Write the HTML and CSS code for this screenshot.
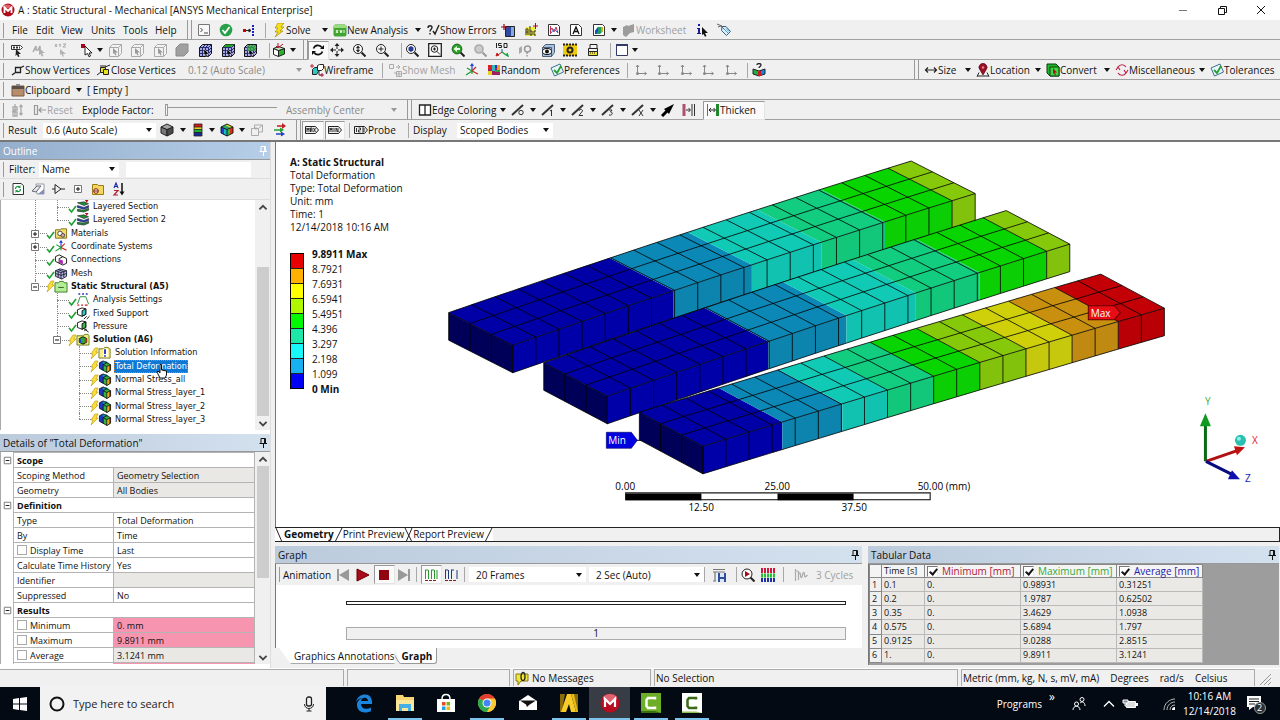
FILE: index.html
```html
<!DOCTYPE html>
<html lang="en">
<head>
<meta charset="utf-8">
<title>A : Static Structural - Mechanical [ANSYS Mechanical Enterprise]</title>
<link rel="stylesheet" href="styles.css">
</head>
<body>
<svg class="defs" aria-hidden="true">
<symbol id="logo" viewBox="0 0 14 14"><circle cx="7" cy="7" r="6.5" fill="#b00d1c"/><ellipse cx="6" cy="3.5" rx="4" ry="2" fill="#e0606a"/><path d="M3.500 10V4.500L7 8l3.500-3.500V10" fill="none" stroke="#fff" stroke-width="1.800"/></symbol>
<symbol id="prompt" viewBox="0 0 14 14"><path d="M1.500 1.500h11v11h-11z" fill="#f8f8f8" stroke="#777"/><path d="M3.500 5l2 2-2 2M7 10h4" fill="none" stroke="#444"/></symbol>
<symbol id="ok" viewBox="0 0 14 14"><circle cx="7" cy="7" r="6.300" fill="#28a04a"/><path d="M3.500 7l2.500 3 4.500-6" fill="none" stroke="#fff" stroke-width="1.800"/></symbol>
<symbol id="dots" viewBox="0 0 14 14"><path d="M1 6h3v3H1z" fill="#c00"/><path d="M4 7.500h4M7 6l2 1.500L7 9z" stroke="#222" fill="#222"/><path d="M10 2h2v2h-2zM10 5h2v2h-2zM10 8h2v2h-2zM10 11h2v2h-2z" fill="#2020c0"/></symbol>
<symbol id="bolt" viewBox="0 0 14 14"><path d="M6 0h6L9 4h3L8 8h3L3 14l3-5H3l3-4H3z" fill="#f5de1a" stroke="#9a8200" stroke-width=".6"/></symbol>
<symbol id="newan" viewBox="0 0 14 14"><rect x=".5" y="1.500" width="13" height="12" rx="2" fill="#43a531"/><path d="M1 2h12v3H1z" fill="#9bdc7c"/><path d="M3 7l2 3m0-3l-2 3m4-3l1 3 1-3m2 0v3" stroke="#e8ffd8" fill="none"/></symbol>
<symbol id="help" viewBox="0 0 14 14"><path d="M2 5c0-3 4-3 4-.5C6 6 4 6.500 4 8.500m0 1.500v1.500M7 8l2 3 4-9" fill="none" stroke="#222" stroke-width="1.400"/></symbol>
<symbol id="img" viewBox="0 0 14 14"><path d="M4.500 3.500h9v10h-9z" fill="#2e4a9e" stroke="#222"/><path d="M10 4h3v9h-3z" fill="#88a8e0"/><path d="M0 4h6M3 1v6" stroke="#a00018" stroke-width="1.200"/></symbol>
<symbol id="abc" viewBox="0 0 14 14"><path d="M1 4h11v9H1z" fill="#f1ee3f"/><path d="M2 12V6h2v6M2 9h2M6 3v9h2V8H6M12 8h-2v4h2" stroke="#333" fill="none"/><path d="M9 3h5M11.500 0v6" stroke="#b00018"/></symbol>
<symbol id="chart" viewBox="0 0 14 14"><path d="M1.500 1.500h9l2 2v9h-11z" fill="#fff" stroke="#333"/><path d="M3.500 3v8M3 8l2-3 2 4 2-5 2 6" stroke="#c03050" fill="none"/><path d="M4 10l3-4 4 4" stroke="#4070d0" fill="none"/></symbol>
<symbol id="doca" viewBox="0 0 14 14"><path d="M1.500 1.500h8l3 3v8h-11z" fill="#fff" stroke="#333"/><path d="M4 11l3-7 3 7M5 8.500h4" stroke="#111" fill="none" stroke-width="1.300"/></symbol>
<symbol id="docc" viewBox="0 0 14 14"><path d="M1.500 1.500h9l2 2v9h-11z" fill="#fff" stroke="#333"/><path d="M3 8l3-4h5v4l-3 3H3z" fill="#18a060"/><path d="M3 8l3-4v4l-2 3H3z" fill="#2040d0"/><path d="M9 4h2v4l-2 2z" fill="#e0a010"/></symbol>
<symbol id="sheet" viewBox="0 0 14 14"><path d="M1 4l4-2 1 1 6-2v8l-4 1-4 4-3-2z" fill="#9c9c9c"/></symbol>
<symbol id="info" viewBox="0 0 14 14"><path d="M3 1h2v2H3zM2 5h3v5h1v1H2v-1h1V6H2z" fill="#1a1a9a"/><path d="M7 4l6 6H10l1.500 3-1.500.7L8.500 11 7 12z" fill="#111"/></symbol>
<symbol id="tag" viewBox="0 0 14 14"><path d="M5 3.500h4l4.500 5-4 4-5-5z" fill="#d8eefa" stroke="#3a6080"/><path d="M0 1l5 2M1 4l3-1 3 3" stroke="#666" fill="none"/><path d="M7 6l4 4M9 5.500l3 3" stroke="#4aa0c8"/></symbol>
<symbol id="rzoom" viewBox="0 0 14 14"><path d="M1.500 2.500h9l2 2-2 2h-9z" fill="#fff" stroke="#333"/><path d="M3 4.500h7" stroke="#333" stroke-dasharray="2 1" stroke-width="2"/><path d="M6 6l5 5H8.500l1 2.500-1.500.5-1-2.500L5.500 13z" fill="#222"/></symbol>
<symbol id="gcur" viewBox="0 0 14 14"><path d="M1 9l3-6v4h2l2-4v5" fill="none" stroke="#aaa" stroke-width="1.500"/><path d="M7 5l6 5h-3l1.500 3-1.500.6L8.500 11 7 12z" fill="#b0b0b0"/></symbol>
<symbol id="xyz" viewBox="0 0 14 14"><path d="M1 1l2 3m0-3L1 4m4-3l1 1.500L7 1M6 2.500V4m3-3h3L9 4h3" stroke="#999" fill="none" stroke-width=".8"/><path d="M6 6l6 5H9l1 2.500H8.500L7.500 11 6 12z" fill="#b4b4b4"/></symbol>
<symbol id="cursor" viewBox="0 0 14 14"><path d="M1 1h4v4H1z" fill="#b00018"/><path d="M5 3l7 7H9l1.500 3-1.500.8-1.500-3.300L5 12z" fill="#fff" stroke="#222"/></symbol>
<symbol id="selg" viewBox="0 0 14 14"><path d="M1.500 4.500l3-3h9v9l-3 3h-9zM1.500 4.500h9v9M10.500 4.500l3-3" fill="#f2f2f2" stroke="#aaa"/><path d="M5 5l5 4.500H7.500l1 2.500-1 .5L6 10l-1 1z" fill="#999"/></symbol>
<symbol id="selbox" viewBox="0 0 14 14"><path d="M1 5l4-4h8v8l-4 4H1z" fill="#a0a0a0" stroke="#8a8a8a"/></symbol>
<symbol id="selb" viewBox="0 0 14 14"><path d="M1.500 4.500l3-3h9v9l-3 3h-9z" fill="#aaa8e0" stroke="#111"/><path d="M1.500 7.500h9l3-3M1.500 10.500h9l3-3M4.500 4.500v9M7.500 4.500v9M10.500 4.500v9M4.500 4.500l3-3M7.500 4.500l3-3M10.500 4.500l3-3M1.500 4.500h9" stroke="#222a70" fill="none"/><path d="M6 6l5 5H8.500l1 2-1 .5L7 11l-1 1z" fill="#000" stroke="#fff" stroke-width=".4"/></symbol>
<symbol id="selgr" viewBox="0 0 14 14"><use href="#selb"/><path d="M2 4l3-2.500h8L10 4z" fill="#25a025"/></symbol>
<symbol id="selgg" viewBox="0 0 14 14"><use href="#selb"/><path d="M4 2h9v6H4z" fill="#30b030" opacity=".7"/></symbol>
<symbol id="gcube" viewBox="0 0 14 14"><path d="M1.500 5.500l5 2v6l-5-2z" fill="#fff" stroke="#222"/><path d="M6.500 7.500l6-2v5.500l-6 2.500z" fill="#27b427" stroke="#222"/><path d="M1.500 5.500l5-2 6 2-6 2z" fill="#c8f0c8" stroke="#222"/><path d="M6 0v5M4 3l2 2 5-4" stroke="#c01028" fill="none"/></symbol>
<symbol id="rotate" viewBox="0 0 14 14"><path d="M2.500 5.500c1.500-4 6.500-4 8.500-1M11.500 8.500c-1.500 4-6.500 4-8.500 1" fill="none" stroke="#111" stroke-width="1.600"/><path d="M13 2v4H9zM1 12V8h4z" fill="#111"/></symbol>
<symbol id="move" viewBox="0 0 14 14"><path d="M7 2v10M2 7h10" stroke="#222" stroke-dasharray="4 2"/><path d="M7 0l2.500 3h-5zM7 14l2.500-3h-5zM0 7l3-2.500v5zM14 7l-3-2.500v5z" fill="#222"/></symbol>
<symbol id="mag" viewBox="0 0 14 14"><circle cx="6" cy="6" r="4.500" fill="#f8f8f8" stroke="#222"/><path d="M9.500 9.500l4 4" stroke="#222" stroke-width="2"/><path d="M6 3v6M4.500 5L6 3l1.500 2zM4.500 7L6 9l1.500-2z" stroke="#222" fill="#222" stroke-width=".7"/></symbol>
<symbol id="magp" viewBox="0 0 14 14"><circle cx="6" cy="6" r="4.500" fill="#f8f8f8" stroke="#222"/><path d="M9.500 9.500l4 4" stroke="#222" stroke-width="2"/><path d="M6 3.500v5M3.500 6h5" stroke="#222"/></symbol>
<symbol id="magf" viewBox="0 0 14 14"><circle cx="6" cy="6" r="4.500" fill="#fff" stroke="#222"/><path d="M9.500 9.500l4 4" stroke="#222" stroke-width="2"/><path d="M6 3l2.500 1.500v3L6 9 3.500 7.500v-3z" fill="#283c96"/></symbol>
<symbol id="magb" viewBox="0 0 14 14"><path d="M.7.7h12.600v12.600H.7z" fill="#fff" stroke="#222" stroke-width="1.300"/><circle cx="6.500" cy="6" r="3.300" fill="#eee" stroke="#222"/><path d="M9 8.500l3 3M6.500 4.500v3M5 6h3" stroke="#222"/></symbol>
<symbol id="maggr" viewBox="0 0 14 14"><circle cx="6" cy="6" r="4.700" fill="#2ea52e" stroke="#2b7a2b" stroke-width="1.400"/><path d="M9.500 9.500l4 4" stroke="#222" stroke-width="2"/><path d="M2.500 6L6 3v2h3v2H6v2z" fill="#e8ffe0"/></symbol>
<symbol id="magx" viewBox="0 0 14 14"><circle cx="6" cy="6" r="4" fill="#ccc" stroke="#aaa" stroke-width="1.600"/><path d="M9.500 9.500l4 4" stroke="#999" stroke-width="2"/></symbol>
<symbol id="iso" viewBox="0 0 14 14"><path d="M1.500 0v5M6.500.5h-3v2h3v2h-3M9 .5h3v4H9z" stroke="#222" fill="none"/><path d="M7 9V6" stroke="#2050c0"/><path d="M7 9l-4 3M1 13l1-3 2 2z" stroke="#c02020" fill="#c02020"/><path d="M7 9l4 3 2 1-1-3" stroke="#18a040" fill="none" stroke-width="1.400"/></symbol>
<symbol id="look" viewBox="0 0 14 14"><path d="M1 5l3-2v6l-3 2z" fill="#aaa"/><circle cx="9.500" cy="6" r="3" fill="none" stroke="#999" stroke-width="1.500"/><path d="M9 9v2M9 12v1.500" stroke="#999" stroke-width="1.500"/></symbol>
<symbol id="eye" viewBox="0 0 14 14"><path d="M1.500 4.500l3-3h9v8l-3 4h-9z" fill="#a8c2de" stroke="#4a6078"/><path d="M1.500 4.500h9v9" stroke="#4a6078" fill="none"/><ellipse cx="6" cy="8.500" rx="4.500" ry="3" fill="#fff" stroke="#111"/><circle cx="6" cy="8.500" r="2" fill="#111"/></symbol>
<symbol id="film" viewBox="0 0 14 14"><path d="M0 1h14v12H0z" fill="#f2cc0c"/><path d="M0 1.500h14M0 12.500h14" stroke="#222" stroke-width="2" stroke-dasharray="2 1"/><circle cx="7" cy="7" r="2.500" fill="#f2cc0c" stroke="#222" stroke-width="2"/></symbol>
<symbol id="print" viewBox="0 0 14 14"><path d="M4 1.500h7v4H4zM2.500 5.500h9v3h-9z" fill="#f4f4f4" stroke="#222"/><path d="M2.500 8.500h9v4h-9z" fill="#f0e028" stroke="#222"/><path d="M4 10h6" stroke="#222" stroke-dasharray="1 1"/></symbol>
<symbol id="win" viewBox="0 0 14 14"><path d="M1.500 1.500h11v11h-11z" fill="#fff" stroke="#333a6a"/><path d="M1 2h12" stroke="#333a6a" stroke-width="2"/></symbol>
<symbol id="vert" viewBox="0 0 14 14"><path d="M4.500 4.500h5v5h-5zM9 5l4-2M5 9l-4 3" fill="none" stroke="#222" stroke-width="1.300"/></symbol>
<symbol id="cvert" viewBox="0 0 14 14"><path d="M3.500 4.500h5v5h-5z" fill="#e8e020" stroke="#222"/><path d="M6.500 6.500h5v5h-5z" fill="#e8e020" stroke="#222"/><path d="M8 4l5-2M0 12l4-3M3 3h6" stroke="#222" fill="none"/></symbol>
<symbol id="wire" viewBox="0 0 14 14"><path d="M2.500 6.500l2-2h4v4l-2 3h-4z" fill="#35c5c0" stroke="#222"/><path d="M7.500 2.500l2-1h4v4l-2 2h-4zM9 8v4h4" fill="#fff" stroke="#222"/><path d="M0 3h4M2 1v4M10 12h4M12 10v4" stroke="#c02040"/></symbol>
<symbol id="smesh" viewBox="0 0 14 14"><path d="M1.500 1.500h4v4h-4zM8.500 8.500h5v5h-5zM11 8.500v5M8.500 11h5M8 4h4M10 2l2 2-2 2M6 10l2 0" fill="none" stroke="#aaa"/></symbol>
<symbol id="axes" viewBox="0 0 14 14"><path d="M7 8V1M5.500 3L7 1l1.500 2" stroke="#2040d0" fill="none" stroke-width="1.200"/><path d="M7 8l6 3M7 8l4-4" stroke="#d02020" fill="none" stroke-width="1.200"/><path d="M7 8l-6 4M7 8L2 5M7 8v3" stroke="#18a030" fill="none" stroke-width="1.200"/></symbol>
<symbol id="random" viewBox="0 0 14 14"><path d="M1 2h12v10H1z" fill="#a02060"/><path d="M1 2h4v4H1z" fill="#e02020"/><path d="M5 2h3v6H5z" fill="#30b8c0"/><path d="M8 2h2v3H8z" fill="#3030c0"/><path d="M10 2h3v5h-3z" fill="#f0a020"/><path d="M1 8h4v4H1z" fill="#e8d020"/><path d="M8 7h5v2H8z" fill="#30a040"/></symbol>
<symbol id="pref" viewBox="0 0 14 14"><path d="M1 5l9-4 3.500 8-9 4z" fill="#e8f6fc" stroke="#3a7090"/><path d="M4 7l3 3 4-7" fill="none" stroke="#28a030" stroke-width="1.800"/></symbol>
<symbol id="gax" viewBox="0 0 14 14"><path d="M3.500 10V2M2 4l1.500-2L5 4M3.500 10.500h9M10.500 9l2 1.500-2 1.500" fill="none" stroke="#888"/><circle cx="3.500" cy="10.500" r="1.500" fill="#888"/></symbol>
<symbol id="book" viewBox="0 0 14 14"><path d="M1 6l6 2v5l-6-2z" fill="#20b040" stroke="#222"/><path d="M13 6L7 8v5l6-2z" fill="#2080e0" stroke="#222"/><path d="M6 8h3v5H6z" fill="#c02020"/><path d="M5 2c0-2 4-2 4 0 0 1.500-2 1.500-2 3" stroke="#222" fill="none" stroke-width="1.300"/></symbol>
<symbol id="size" viewBox="0 0 14 14"><path d="M1.500 7h11M4 4.500L1.500 7 4 9.500M10 4.500L12.500 7 10 9.500" fill="none" stroke="#222" stroke-width="1.200"/></symbol>
<symbol id="pin3" viewBox="0 0 14 14"><path d="M1 13.500l2-4M13 13.500l-2-4M1 13h12" stroke="#222" fill="none"/><path d="M7 12L4 7a4 4 0 1 1 6 0z" fill="#9c0f28" stroke="#400" stroke-width=".6"/><circle cx="7" cy="4.500" r="1.200" fill="#ec8090"/></symbol>
<symbol id="conv" viewBox="0 0 14 14"><path d="M1 1h9l3 3v9H4l-3-3z" fill="#1fb52a" stroke="#103a10"/><path d="M4 4h9v9H4z" fill="#38d840" stroke="#103a10"/><path d="M7 5l4 4.500H9l1 2.500-1 .5L8 10l-1 1z" fill="#b01020"/></symbol>
<symbol id="misc" viewBox="0 0 14 14"><path d="M3 4c2-3 6-3 8 0M3 10c2 3 6 3 8 0M1 7l2-3 2 3M13 7l-2 3-2-3" fill="none" stroke="#c02048" stroke-width="1.200"/></symbol>
<symbol id="clip" viewBox="0 0 14 14"><path d="M1 3h12v10H1z" fill="#b88d6c" stroke="#7a5a40"/><path d="M1 3h12v3H1z" fill="#5a5048"/><path d="M5 1h4v2H5z" fill="#8a8a8a"/></symbol>
<symbol id="expl" viewBox="0 0 14 14"><path d="M2 4h4v3H2zM2 9h4v4H2zM4 1v12M1 9l6-3M10 2v10M8.500 4L10 2l1.500 2M8.500 10l1.500 2 1.500-2" fill="none" stroke="#aaa" stroke-width="1.300"/></symbol>
<symbol id="reset" viewBox="0 0 14 14"><path d="M1.500 2.500h3v9h-3zM6 7h7M8.500 4.500L6 7l2.500 2.500" fill="none" stroke="#999" stroke-width="1.200"/></symbol>
<symbol id="edge" viewBox="0 0 14 14"><path d="M1.500 2h11v10h-11zM7 2v10" fill="#fff" stroke="#222" stroke-width="1.300"/></symbol>
<symbol id="e0" viewBox="0 0 14 14"><path d="M1 12L12 2" stroke="#333" stroke-width="2"/><circle cx="10" cy="9.500" r="2.200" fill="none" stroke="#333"/></symbol>
<symbol id="e1" viewBox="0 0 14 14"><path d="M1 12L12 2" stroke="#333" stroke-width="2"/><path d="M9 8l1.500-1v6" fill="none" stroke="#333"/></symbol>
<symbol id="e2" viewBox="0 0 14 14"><path d="M1 12L12 2" stroke="#333" stroke-width="2"/><path d="M8 8c0-2 4-2 3.500 0L8 12.500h4" fill="none" stroke="#333"/></symbol>
<symbol id="e3" viewBox="0 0 14 14"><path d="M1 12L12 2" stroke="#333" stroke-width="2"/><path d="M8 7h3L9.500 9c3 0 2 4-1.500 3" fill="none" stroke="#333"/></symbol>
<symbol id="ex" viewBox="0 0 14 14"><path d="M1 12L12 2" stroke="#333" stroke-width="2"/><path d="M8 7l4 6m0-6l-4 6" fill="none" stroke="#333"/></symbol>
<symbol id="arrow" viewBox="0 0 14 14"><path d="M1 13l5-5" stroke="#000" stroke-width="3"/><path d="M13 1L3 6l5 5z" fill="#000"/></symbol>
<symbol id="gaps" viewBox="0 0 14 14"><path d="M2 1v12" stroke="#b05070" stroke-width="3"/><path d="M4 7h4M6.500 5l2 2-2 2" stroke="#333" fill="none"/><path d="M10 1v12M12.500 1v12" stroke="#333"/></symbol>
<symbol id="thick" viewBox="0 0 14 14"><path d="M1.500 1v12" stroke="#2a9a2a"/><path d="M3 7h6M5 5L3 7l2 2M7.500 5l2 2-2 2" stroke="#222" fill="none"/><path d="M10 1h3v12h-3z" fill="#1e8a2a"/></symbol>
<symbol id="cube" viewBox="0 0 14 14"><path d="M1 4l6 2.500V13L1 10z" fill="#787878" stroke="#222"/><path d="M13 4L7 6.500V13l6-3z" fill="#4a4a4a" stroke="#222"/><path d="M1 4l6-3 6 3-6 2.500z" fill="#a4a4a4" stroke="#222"/></symbol>
<symbol id="leg" viewBox="0 0 14 14"><path d="M3 1h8v12H3z" fill="#1a2a90"/><path d="M3 1h8v3H3z" fill="#d81818"/><path d="M3 4h8v2H3z" fill="#e8d020"/><path d="M3 6h8v3H3z" fill="#20b030"/><path d="M3 1h8v12H3zM3 4h8M3 6.500h8M3 9.500h8" stroke="#222" fill="none" stroke-width=".8"/></symbol>
<symbol id="ccube" viewBox="0 0 14 14"><path d="M1 4l6 2.500V13L1 10z" fill="#2040d8"/><path d="M4 5l3 1.500V13l-3-1.500z" fill="#18b8c8"/><path d="M7 6.500l3-1v6L7 13z" fill="#28c030"/><path d="M10 5.500L13 4v6l-3 1.500z" fill="#e02818"/><path d="M1 4l6-3 6 3-6 2.500z" fill="#28a868"/><path d="M7 1l6 3-2 1-6-3z" fill="#e8d820"/><path d="M1 4l6 2.500V13L1 10zM7 6.500L13 4v6l-6 3M1 4l6-3 6 3" stroke="#111" fill="none" stroke-width=".9"/></symbol>
<symbol id="rcube" viewBox="0 0 14 14"><path d="M1 3l4-2 3 2v8l-2 1-5-3z" fill="#1c38c0"/><path d="M4 3l4-2 3 2-4 2z" fill="#18a0a8"/><path d="M5 5l4-2 4 2v6l-4 2.500L5 11z" fill="#2cb83c"/><path d="M9 7l4-2v6l-4 2.500z" fill="#e03018"/><path d="M9 7l2-1v6.300L9 13.500z" fill="#e8d820"/><path d="M1 3l4-2 4 2M1 3v6l4 2M5 5l4-2 4 2v6l-4 2.500L5 11zM5 5l4 2 4-2M9 7v6.500" fill="none" stroke="#111" stroke-width=".9"/></symbol>
<symbol id="gbox" viewBox="0 0 14 14"><path d="M1.500 5.500h7v7h-7zM4.500 5V2h8v7H9M6 7V4M8.500 5.500l4-3.500" fill="none" stroke="#aaa"/></symbol>
<symbol id="vec" viewBox="0 0 14 14"><path d="M4 3h6" stroke="#c02020" stroke-width="1.500"/><path d="M9 0l4 3-4 3z" fill="#c02020"/><path d="M1 7h6" stroke="#20a030" stroke-width="1.500"/><path d="M7 4.500L11 7 7 9.500z" fill="#20a030"/><path d="M3 11h5" stroke="#2040c0" stroke-width="1.500"/><path d="M8 8.500l4 2.500-4 2.500z" fill="#2040c0"/></symbol>
<symbol id="max" viewBox="0 0 14 14"><path d="M.5 3.500h10l3 3.500-3 3.500H.5z" fill="#eee" stroke="#222"/><path d="M2 9V5l1 2 1-2v4M5.500 9V5h1.500v4M5.500 7H7M8.500 5l2 4m0-4l-2 4" stroke="#222" fill="none" stroke-width=".9"/></symbol>
<symbol id="min" viewBox="0 0 14 14"><path d="M.5 3.500h10l3 3.500-3 3.500H.5z" fill="#eee" stroke="#222"/><path d="M2 9V5l1 2 1-2v4M6 5v4M8 9V5l2 4V5" stroke="#222" fill="none" stroke-width=".9"/></symbol>
<symbol id="probe" viewBox="0 0 14 14"><path d="M.5 3.500h10l3 3.500-3 3.500H.5z" fill="#eee" stroke="#222"/><path d="M2.500 5v4M4.500 5h2v2h-2v2h2M8 5h2v4H8M8 7h2" stroke="#222" fill="none" stroke-width=".9"/></symbol>
<symbol id="refresh" viewBox="0 0 14 14"><path d="M2 1.500h8l2.500 2v9H2z" fill="#fff" stroke="#333"/><path d="M4.500 7c0-3 3-3 4-2M9.500 7c0 3-3 3-4 2" stroke="#1c9440" fill="none" stroke-width="1.300"/><path d="M9.500 3v3H7zM4.500 11V8H7z" fill="#1c9440"/></symbol>
<symbol id="erase" viewBox="0 0 14 14"><path d="M5 2h8v10H6z" fill="#fff" stroke="#99a"/><path d="M1 9l5-5h4L5 10z" fill="#e4e4ee" stroke="#667"/><path d="M7 12h6V7z" fill="#8490b8"/></symbol>
<symbol id="tri" viewBox="0 0 14 14"><path d="M1 7h3M4 2.500l6 4.500-6 4.500zM10 7h4" fill="none" stroke="#222"/></symbol>
<symbol id="plus" viewBox="0 0 14 14"><path d="M3.500 3.500h7v7h-7z" fill="#fff" stroke="#777"/><path d="M7 5v4M5 7h4" stroke="#111"/></symbol>
<symbol id="minus" viewBox="0 0 14 14"><path d="M3.500 3.500h7v7h-7z" fill="#fff" stroke="#777"/><path d="M5 7h4" stroke="#111"/></symbol>
<symbol id="fold" viewBox="0 0 14 14"><path d="M1.500 2.500h5l1 1h5v9h-11z" fill="#f2d75c" stroke="#9c7c10"/><circle cx="5" cy="9" r="2.300" fill="#fff" stroke="#801010"/><path d="M3 9h4" stroke="#801010"/></symbol>
<symbol id="az" viewBox="0 0 14 14"><path d="M2 6l2-5 2 5M3 4.500h2" stroke="#2030b0" fill="none" stroke-width="1.200"/><path d="M2 8.500h4L2 13h4" stroke="#b02030" fill="none" stroke-width="1.200"/><path d="M10 1v11" stroke="#111" stroke-width="1.500"/><path d="M7.500 9.500h5L10 13.500z" fill="#111"/></symbol>
<symbol id="pushpin" viewBox="0 0 14 14"><path d="M5 2.500h4.500v5M5 2.500v5M8.500 3v4M3.500 7.500h7.500M7.500 8v4" stroke="currentColor" fill="none"/></symbol>
<symbol id="chk" viewBox="0 0 9 14"><path d="M1 9l2.500 3L8 6" stroke="#1ea030" fill="none" stroke-width="1.600"/></symbol>
<symbol id="flash" viewBox="0 0 9 14"><path d="M5 2h3L6 6h2L1 13l2-5H1z" fill="#f8e038" stroke="#c8a010" stroke-width=".7"/></symbol>
<symbol id="layer" viewBox="0 0 14 14"><path d="M1 3l7-1 5 2-5 2z" fill="#209040" stroke="#111" stroke-width=".6"/><path d="M1 6l7 2 5-2v2L8 10 1 8z" fill="#2848c8" stroke="#111" stroke-width=".6"/><path d="M1 10l7 1 5-2v2l-5 2-7-1z" fill="#209040" stroke="#111" stroke-width=".6"/><path d="M9 0h4l-2 3z" fill="#b01020"/></symbol>
<symbol id="mat" viewBox="0 0 14 14"><path d="M1 3h5l1-1h6v10H1z" fill="#f0e070" stroke="#806810"/><circle cx="6" cy="7" r="2.500" fill="#fff" stroke="#444"/><circle cx="9" cy="9" r="2" fill="#e0a8a8" stroke="#444"/></symbol>
<symbol id="conn" viewBox="0 0 14 14"><path d="M1 4l4-2 4 2v5l-4 2-4-2z" fill="#fff" stroke="#111"/><path d="M5 6l4-2 4 2v5l-4 2-4-2z" fill="#fff" stroke="#111"/><path d="M6 7l3 1v4l-3-1z" fill="#b020b0"/></symbol>
<symbol id="mesh" viewBox="0 0 14 14"><path d="M1 4l5-2 7 2v6l-5 3-7-3z" fill="#b8b8e8" stroke="#223"/><path d="M1 7l6 2 6-2M1 4l6 2 6-2M4 5v6M7 6v7M10 5v6M4 3l6 2" stroke="#223" fill="none"/></symbol>
<symbol id="gfold" viewBox="0 0 14 14"><path d="M.5 3h4l1-1.500h4L10.500 3h3v10H.5z" fill="#b4ec98" stroke="#3a7a20"/><path d="M4 8h6" stroke="#2a5a18"/></symbol>
<symbol id="sfold" viewBox="0 0 14 14"><path d="M.5 3h7l1-1.500h4L13.500 3v10H.5z" fill="#f0ec78" stroke="#6a7a20"/><path d="M3 6l4-2 4 2v4l-4 2-4-2z" fill="#28a838" stroke="#111"/><path d="M3 6l2 1v4l-2-1z" fill="#2040d0"/><path d="M9 7l2-1v4l-2 1z" fill="#e02818"/></symbol>
<symbol id="anal" viewBox="0 0 14 14"><path d="M2 1h2M6 1h2M10 1h2" stroke="#2030c0" stroke-width="1.500"/><path d="M1 12l3-8h6l3 8" stroke="#2a8a3a" fill="none"/><path d="M1 13h2M5 13h2M9 13h3" stroke="#c02020" stroke-width="1.500"/></symbol>
<symbol id="fix" viewBox="0 0 14 14"><path d="M1 3l5-2 4 1v6l-4 2-5-2z" fill="#fff" stroke="#111"/><path d="M6 4l4-2v6l-4 2z" fill="#30c8d0" stroke="#111"/><path d="M8 13l3-3M11 13l3-3" stroke="#111"/></symbol>
<symbol id="pres" viewBox="0 0 14 14"><path d="M1 3l5-2 4 1v6l-4 2-5-2z" fill="#fff" stroke="#111"/><path d="M6 4l4-2v6l-4 2z" fill="#38b848" stroke="#111"/><path d="M13 13L9 10M9 12v-2h2" stroke="#111" fill="none"/></symbol>
<symbol id="sinfo" viewBox="0 0 14 14"><path d="M.5 3h5l1-1.500h4L11.500 3h1v10H.5z" fill="#f6f088" stroke="#7a7020"/><path d="M5 3h5v9H5z" fill="#fff"/><path d="M7 3.500v5" stroke="#2030c0" stroke-width="2"/><path d="M7 10v1.500" stroke="#2030c0" stroke-width="2"/></symbol>
<symbol id="prev" viewBox="0 0 14 14"><path d="M1 1h2v12H1zM13 1v12L3 7z" fill="#999"/></symbol>
<symbol id="play" viewBox="0 0 14 14"><path d="M1 1l12 6-12 6z" fill="#a80c1c" stroke="#600"/></symbol>
<symbol id="stop" viewBox="0 0 14 14"><path d="M2 2h10v10H2z" fill="#900510"/></symbol>
<symbol id="next" viewBox="0 0 14 14"><path d="M11 1h2v12h-2zM1 1v12l10-6z" fill="#999"/></symbol>
<symbol id="fr1" viewBox="0 0 14 14"><path d="M1.500 2v9M4.500 2v9M7.500 2v9M10.500 2v9M13 2v9M1 2h3M7 2h3" stroke="#2a9a30" fill="none"/><path d="M1 12.500h12" stroke="#802020" stroke-dasharray="3 1"/></symbol>
<symbol id="fr2" viewBox="0 0 14 14"><path d="M1.500 2v9M4.500 2v9M7.500 2v9M13 2v9M1 2h3M7 2h3" stroke="#203a80" fill="none"/><path d="M1 12.500h12" stroke="#802020" stroke-dasharray="3 1"/></symbol>
<symbol id="save" viewBox="0 0 14 14"><path d="M1 1.500h12M1 4h12M3 4v9M1 13h3" stroke="#777" stroke-width="1.200"/><path d="M6 5h8v9H6z" fill="#2d4fa0"/><path d="M8 5h4v4H8zM8 11h4v3H8z" fill="#dde6f6"/></symbol>
<symbol id="magr" viewBox="0 0 14 14"><circle cx="6" cy="6" r="5" fill="#fff" stroke="#222"/><path d="M9.500 9.500l4 4" stroke="#222" stroke-width="2"/><path d="M4 3l5 3-5 3z" fill="#a80c1c"/></symbol>
<symbol id="bars" viewBox="0 0 14 14"><path d="M0 2.500h14" stroke="#d01840" stroke-width="5" stroke-dasharray="2 1"/><path d="M0 7.500h14" stroke="#20c030" stroke-width="4" stroke-dasharray="2 1"/><path d="M0 12h14" stroke="#2030a0" stroke-width="4" stroke-dasharray="2 1"/></symbol>
<symbol id="cyc" viewBox="0 0 14 14"><path d="M1.500 1v12M1 3h3M4.500 3v9M4.500 7c1-3 2-3 2 0s1 4 2 0 2-3 2 0 1 2 3 0" fill="none" stroke="#aaa" stroke-width="1.200"/></symbol>
<symbol id="msg" viewBox="0 0 14 14"><path d="M1 3h12v7H6l-3 4v-4H1z" fill="#f0e838" stroke="#887810"/><ellipse cx="8" cy="5.500" rx="2" ry="4" fill="none" stroke="#222" stroke-width="1.300"/></symbol>
<symbol id="winlogo" viewBox="0 0 16 16"><path d="M1 3l6-1v5.500H1zM8 2l7-1v6.500H8zM1 8.500h6V14l-6-1zM8 8.500h7V15l-7-1z" fill="#fff"/></symbol>
<symbol id="mic" viewBox="0 0 16 16"><rect x="5.500" y="1" width="5" height="9" rx="2" fill="none" stroke="#222" stroke-width="1.300"/><path d="M3.500 8c0 6 9 6 9 0M8 12.500V15M5.500 15h5" fill="none" stroke="#222"/></symbol>
<symbol id="ie" viewBox="0 0 20 20"><path d="M2 9C3 4 7 1.500 11 1.500c5 0 7.500 4 7 9.500H7c.3 5 6 6 10 3.500v3.700C9 21.500 3 18 3 12c0-4 3-6 5-7-3 .5-5 2-6 4zm5-1h7c0-4.500-6.500-4.500-7 0z" fill="#1b84dc"/></symbol>
<symbol id="expr" viewBox="0 0 20 20"><path d="M1 2h7l1 2h10v14H1z" fill="#f6d774"/><path d="M1 7h18v11H1z" fill="#fbe79c"/><path d="M4 18v-7h12v7h-3v-3H7v3z" fill="#45b0e6"/></symbol>
<symbol id="store" viewBox="0 0 20 20"><path d="M1 6h18v13H1z" fill="#fff"/><path d="M6 6c0-6 8-6 8 0" fill="none" stroke="#fff" stroke-width="1.500"/><path d="M6 9h3.500v3.500H6z" fill="#e84a28"/><path d="M10.500 9H14v3.500h-3.500z" fill="#7cb518"/><path d="M6 13.500h3.500V17H6z" fill="#1ea0e0"/><path d="M10.500 13.500H14V17h-3.500z" fill="#f8b810"/></symbol>
<symbol id="chrome" viewBox="0 0 20 20"><circle cx="10" cy="10" r="9" fill="#fcc934"/><path d="M10 10L2.200 5.500A9 9 0 0 1 17.800 5.500z" fill="#e33b2e"/><path d="M10 10L2.200 5.500A9 9 0 0 0 10 19l4-7z" fill="#2da94f"/><path d="M10 5.500h7.800A9 9 0 0 1 10 19l4-7z" fill="#fcc934"/><circle cx="10" cy="10" r="4.500" fill="#fff"/><circle cx="10" cy="10" r="3.500" fill="#4285f4"/></symbol>
<symbol id="mail" viewBox="0 0 20 20"><path d="M1 8l9-6 9 6v9H1z" fill="#fff"/><path d="M2 7.500l16 0L11 12l-2 2-1-2.500z" fill="#111"/></symbol>
<symbol id="ans" viewBox="0 0 20 20"><path d="M1 1h5L3 19H1z" fill="#8a6c08"/><path d="M8 1h4l5 18h-5l-2-8-3 8H2z" fill="#f8cc28"/><path d="M14 1h5v18h-1z" fill="#8a6c08"/><path d="M12 1h3l4 18h-2z" fill="#e8b818"/></symbol>
<symbol id="mech" viewBox="0 0 20 20"><circle cx="10" cy="10" r="9.500" fill="#b60d20"/><ellipse cx="10" cy="5" rx="7" ry="4" fill="#df6470"/><path d="M5 14V6l5 5 5-5v8" stroke="#fff" stroke-width="2.200" fill="none"/></symbol>
<symbol id="cam" viewBox="0 0 20 20"><path d="M0 0h20v20H0z" fill="#6cae26"/><path d="M14 6.500V5H7L5.500 7v6L7 15h7v-1.500" fill="none" stroke="#fff" stroke-width="2.500"/><path d="M0 18h14l6 2H0z" fill="#3a7010"/></symbol>
<symbol id="cam2" viewBox="0 0 20 20"><path d="M0 0h20v20H0z" fill="#fff"/><path d="M14 6.500V5H7L5.500 7v6L7 15h7v-1.500" fill="none" stroke="#3a6a18" stroke-width="2.500"/><path d="M0 18.500h14l6 1.500H0z" fill="#8cc050"/></symbol>
<symbol id="people" viewBox="0 0 16 16"><circle cx="5.500" cy="8" r="2" fill="none" stroke="#fff"/><path d="M2 14c0-5 7-5 7 0" fill="none" stroke="#fff"/><circle cx="11" cy="3.500" r="2" fill="none" stroke="#fff"/><path d="M9 7c2-2 5-1 5 3" fill="none" stroke="#fff"/></symbol>
<symbol id="up" viewBox="0 0 16 16"><path d="M3 10.500l5-5 5 5" fill="none" stroke="#fff" stroke-width="1.300"/></symbol>
<symbol id="bat" viewBox="0 0 16 16"><path d="M4.500 5.500h9v6h-9z" fill="#ddd" stroke="#fff"/><path d="M14 7h2v3h-2z" fill="#fff"/><path d="M1 4h5v3H1zM3 7v3h2" fill="#889" stroke="#fff"/></symbol>
<symbol id="wifi" viewBox="0 0 16 16"><path d="M2 14C2 7 8 3 13 3M5 14c0-5 4-8 8-8M8 14c0-3 2-5 5-5" fill="none" stroke="#bbb"/><path d="M10 14c0-2 1-3 3-3v3z" fill="#fff"/></symbol>
<symbol id="note" viewBox="0 0 20 20"><path d="M1 2h14v11H7l-4 3v-3H1z" fill="#fff"/><path d="M3 5h10M3 7.500h10M3 10h6" stroke="#222"/><circle cx="14" cy="14" r="5.500" fill="#2c3036" stroke="#9a9a9a"/></symbol>
</svg>

<header class="title"><svg class="i"><use href="#logo"/></svg><h1>A : Static Structural - Mechanical [ANSYS Mechanical Enterprise]</h1>
<div class="wctl"><button aria-label="Minimize"><svg class="i"><path d="M3 7.500h8" stroke="#777"/></svg></button><button aria-label="Restore"><svg class="i"><path d="M3.500 5.500h6v6h-6zM5.500 5V3.500h6v6H10" fill="none" stroke="#111"/></svg></button><button aria-label="Close"><svg class="i"><path d="M3 3l8 8M11 3l-8 8" stroke="#111"/></svg></button></div></header>

<nav class="bar bar1" aria-label="Menu"><i class="grip"></i><button>File</button><button>Edit</button><button>View</button><button>Units</button><button>Tools</button><button>Help</button><i class="grip dbl"></i>
<button aria-label="Prompt"><svg class="i"><use href="#prompt"/></svg></button><button aria-label="OK"><svg class="i"><use href="#ok"/></svg></button><button aria-label="Steps"><svg class="i"><use href="#dots"/></svg></button><i class="sep"></i>
<button class="dd"><svg class="i"><use href="#bolt"/></svg>Solve</button><button class="dd"><svg class="i"><use href="#newan"/></svg>New Analysis</button><button><svg class="i"><use href="#help"/></svg>Show Errors</button>
<button aria-label="Image"><svg class="i"><use href="#img"/></svg></button><button aria-label="Label"><svg class="i"><use href="#abc"/></svg></button><button aria-label="Chart"><svg class="i"><use href="#chart"/></svg></button><button aria-label="Comment"><svg class="i"><use href="#doca"/></svg></button><button class="dd" aria-label="Figure"><svg class="i"><use href="#docc"/></svg></button>
<button disabled><svg class="i"><use href="#sheet"/></svg>Worksheet</button><button aria-label="Info"><svg class="i"><use href="#info"/></svg></button><button aria-label="Tag"><svg class="i"><use href="#tag"/></svg></button></nav>

<div class="bar bar2"><i class="grip"></i><button aria-label="Label pick"><svg class="i"><use href="#rzoom"/></svg></button><button aria-label="Direction"><svg class="i"><use href="#gcur"/></svg></button><button aria-label="Coordinates"><svg class="i"><use href="#xyz"/></svg></button><button class="dd" aria-label="Select mode"><svg class="i"><use href="#cursor"/></svg></button>
<button aria-label="Vertex"><svg class="i"><use href="#selg"/></svg></button><button aria-label="Edge"><svg class="i"><use href="#selg"/></svg></button><button aria-label="Face"><svg class="i"><use href="#selg"/></svg></button><button aria-label="Body"><svg class="i"><use href="#selbox"/></svg></button><button aria-label="Node"><svg class="i"><use href="#selb"/></svg></button><button aria-label="Element face"><svg class="i"><use href="#selgr"/></svg></button><button aria-label="Element"><svg class="i"><use href="#selgg"/></svg></button><i class="sep"></i>
<button class="dd" aria-label="Extend"><svg class="i"><use href="#gcube"/></svg></button><i class="grip dbl"></i><button class="on" aria-label="Rotate"><svg class="i"><use href="#rotate"/></svg></button><button aria-label="Pan"><svg class="i"><use href="#move"/></svg></button><button aria-label="Zoom"><svg class="i"><use href="#mag"/></svg></button><button aria-label="Box zoom"><svg class="i"><use href="#magp"/></svg></button><i class="sep"></i>
<button aria-label="Fit"><svg class="i"><use href="#magf"/></svg></button><button aria-label="Magnifier"><svg class="i"><use href="#magb"/></svg></button><button aria-label="Previous view"><svg class="i"><use href="#maggr"/></svg></button><button aria-label="Next view"><svg class="i"><use href="#magx"/></svg></button><button aria-label="Isometric"><svg class="i"><use href="#iso"/></svg></button><button aria-label="Look at"><svg class="i"><use href="#look"/></svg></button><button aria-label="Manage views"><svg class="i"><use href="#eye"/></svg></button><button aria-label="Film"><svg class="i"><use href="#film"/></svg></button><button aria-label="Print"><svg class="i"><use href="#print"/></svg></button><i class="sep"></i><button class="dd" aria-label="Viewports"><svg class="i"><use href="#win"/></svg></button></div>

<div class="bar bar3"><i class="grip"></i><button><svg class="i"><use href="#vert"/></svg>Show Vertices</button><button><svg class="i"><use href="#cvert"/></svg>Close Vertices</button><label class="combo off"><select disabled aria-label="Vertex scale"><option>0.12 (Auto Scale)</option></select></label><button><svg class="i"><use href="#wire"/></svg>Wireframe</button><i class="sep"></i><button disabled><svg class="i"><use href="#smesh"/></svg>Show Mesh</button><button aria-label="Axes"><svg class="i"><use href="#axes"/></svg></button><button><svg class="i"><use href="#random"/></svg>Random</button><button><svg class="i"><use href="#pref"/></svg>Preferences</button><i class="sep"></i>
<button aria-label="Axis 1"><svg class="i"><use href="#gax"/></svg></button><button aria-label="Axis 2"><svg class="i"><use href="#gax"/></svg></button><button aria-label="Axis 3"><svg class="i"><use href="#gax"/></svg></button><button aria-label="Axis 4"><svg class="i"><use href="#gax"/></svg></button><button aria-label="Axis 5"><svg class="i"><use href="#gax"/></svg></button><i class="sep"></i><button aria-label="Guide"><svg class="i"><use href="#book"/></svg></button><span></span>
<i class="grip dbl"></i><button class="dd"><svg class="i"><use href="#size"/></svg>Size</button><button class="dd"><svg class="i"><use href="#pin3"/></svg>Location</button><button class="dd"><svg class="i"><use href="#conv"/></svg>Convert</button><button class="dd"><svg class="i"><use href="#misc"/></svg>Miscellaneous</button><button><svg class="i"><use href="#pref"/></svg>Tolerances</button></div>

<div class="bar bar4"><i class="grip"></i><button class="dd"><svg class="i"><use href="#clip"/></svg>Clipboard</button><span>[ Empty ]</span></div>

<div class="bar bar5"><i class="grip"></i><button disabled aria-label="Explode"><svg class="i"><use href="#expl"/></svg></button><button disabled><svg class="i"><use href="#reset"/></svg>Reset</button><label for="explode">Explode Factor:</label><input id="explode" type="range" value="0"><label class="combo off"><select disabled aria-label="Explode centre"><option>Assembly Center</option></select></label><i class="grip dbl"></i>
<button class="dd"><svg class="i"><use href="#edge"/></svg>Edge Coloring</button><button class="dd" aria-label="Edge 0"><svg class="i"><use href="#e0"/></svg></button><button class="dd" aria-label="Edge 1"><svg class="i"><use href="#e1"/></svg></button><button class="dd" aria-label="Edge 2"><svg class="i"><use href="#e2"/></svg></button><button class="dd" aria-label="Edge 3"><svg class="i"><use href="#e3"/></svg></button><button class="dd" aria-label="Edge X"><svg class="i"><use href="#ex"/></svg></button><button aria-label="Direction"><svg class="i"><use href="#arrow"/></svg></button><button aria-label="Gap"><svg class="i"><use href="#gaps"/></svg></button><button class="on"><svg class="i"><use href="#thick"/></svg>Thicken</button></div>

<div class="bar bar6"><i class="grip"></i><label for="scale">Result</label><span class="combo"><select id="scale"><option>0.6 (Auto Scale)</option></select></span><button class="dd" aria-label="Geometry"><svg class="i"><use href="#cube"/></svg></button><button class="dd" aria-label="Contours"><svg class="i"><use href="#leg"/></svg></button><button class="dd" aria-label="Edges"><svg class="i"><use href="#ccube"/></svg></button><button aria-label="Undeformed"><svg class="i"><use href="#gbox"/></svg></button><button aria-label="Vectors"><svg class="i"><use href="#vec"/></svg></button><i class="grip dbl"></i><button class="on" aria-label="Maximum"><svg class="i"><use href="#max"/></svg></button><button class="on" aria-label="Minimum"><svg class="i"><use href="#min"/></svg></button><i class="sep"></i><button><svg class="i"><use href="#probe"/></svg>Probe</button><i class="sep"></i><label for="disp">Display</label><span class="combo"><select id="disp"><option>Scoped Bodies</option></select></span></div>

<main>
<aside>
<section class="outline">
<h2 class="cap act">Outline<svg class="i"><use href="#pushpin"/></svg></h2>
<div class="filter"><i class="grip"></i><label for="fname">Filter:</label><span class="combo"><select id="fname"><option>Name</option></select></span><input type="text" aria-label="Filter text"></div>
<div class="otools"><i class="grip"></i><button aria-label="Refresh"><svg class="i"><use href="#refresh"/></svg></button><button aria-label="Clear"><svg class="i"><use href="#erase"/></svg></button><button aria-label="Expand"><svg class="i"><use href="#tri"/></svg></button><button aria-label="Expand all"><svg class="i"><use href="#plus"/></svg></button><button aria-label="Hide folders"><svg class="i"><use href="#fold"/></svg></button><button aria-label="Sort"><svg class="i"><use href="#az"/></svg></button></div>
<div class="scrollrow">
<ul class="tree">
<li><i class="g v"></i><i class="g v h"></i><svg class="st"><use href="#chk"/></svg><svg class="i"><use href="#layer"/></svg><span>Layered Section</span></li>
<li><i class="g v"></i><i class="g l h"></i><svg class="st"><use href="#chk"/></svg><svg class="i"><use href="#layer"/></svg><span>Layered Section 2</span></li>
<li><i class="g v h"><button aria-label="Expand Materials"><svg class="i"><use href="#plus"/></svg></button></i><svg class="st"><use href="#chk"/></svg><svg class="i"><use href="#mat"/></svg><span>Materials</span></li>
<li><i class="g v h"><button aria-label="Expand Coordinate Systems"><svg class="i"><use href="#plus"/></svg></button></i><svg class="st"><use href="#chk"/></svg><svg class="i"><use href="#axes"/></svg><span>Coordinate Systems</span></li>
<li><i class="g v h"></i><svg class="st"><use href="#chk"/></svg><svg class="i"><use href="#conn"/></svg><span>Connections</span></li>
<li><i class="g v h"></i><svg class="st"><use href="#chk"/></svg><svg class="i"><use href="#mesh"/></svg><span>Mesh</span></li>
<li><i class="g l h"><button aria-label="Collapse Static Structural"><svg class="i"><use href="#minus"/></svg></button></i><svg class="st"><use href="#flash"/></svg><svg class="i"><use href="#gfold"/></svg><span class="b">Static Structural (A5)</span></li>
<li><i class="g"></i><i class="g v h"></i><svg class="st"><use href="#chk"/></svg><svg class="i"><use href="#anal"/></svg><span>Analysis Settings</span></li>
<li><i class="g"></i><i class="g v h"></i><svg class="st"><use href="#chk"/></svg><svg class="i"><use href="#fix"/></svg><span>Fixed Support</span></li>
<li><i class="g"></i><i class="g v h"></i><svg class="st"><use href="#chk"/></svg><svg class="i"><use href="#pres"/></svg><span>Pressure</span></li>
<li><i class="g"></i><i class="g l h"><button aria-label="Collapse Solution"><svg class="i"><use href="#minus"/></svg></button></i><svg class="st"><use href="#flash"/></svg><svg class="i"><use href="#sfold"/></svg><span class="b">Solution (A6)</span></li>
<li><i class="g"></i><i class="g"></i><i class="g v h"></i><svg class="st"><use href="#flash"/></svg><svg class="i"><use href="#sinfo"/></svg><span>Solution Information</span></li>
<li><i class="g"></i><i class="g"></i><i class="g v h"></i><svg class="st"><use href="#flash"/></svg><svg class="i"><use href="#rcube"/></svg><span class="sel">Total Deformation<svg class="hand" viewBox="0 0 12 16"><path d="M4 15l-3-6 1-1 2 2V1.500h1.500V7l5 1v4l-1.500 3z" fill="#fff" stroke="#111"/></svg></span></li>
<li><i class="g"></i><i class="g"></i><i class="g v h"></i><svg class="st"><use href="#flash"/></svg><svg class="i"><use href="#rcube"/></svg><span>Normal Stress_all</span></li>
<li><i class="g"></i><i class="g"></i><i class="g v h"></i><svg class="st"><use href="#flash"/></svg><svg class="i"><use href="#rcube"/></svg><span>Normal Stress_layer_1</span></li>
<li><i class="g"></i><i class="g"></i><i class="g v h"></i><svg class="st"><use href="#flash"/></svg><svg class="i"><use href="#rcube"/></svg><span>Normal Stress_layer_2</span></li>
<li><i class="g"></i><i class="g"></i><i class="g l h"></i><svg class="st"><use href="#flash"/></svg><svg class="i"><use href="#rcube"/></svg><span>Normal Stress_layer_3</span></li>
</ul>
<div class="sb low"><svg viewBox="0 0 10 10"><path d="M2 7l3-3 3 3" /></svg><i></i><svg viewBox="0 0 10 10"><path d="M2 4l3 3 3-3"/></svg></div>
</div>
</section>

<section class="details">
<h2 class="cap">Details of "Total Deformation"<svg class="i"><use href="#pushpin"/></svg></h2>
<div class="scrollrow">
<table class="props">
<colgroup><col class="k0"><col class="k1"><col></colgroup>
<tbody>
<tr class="grp"><td><svg class="i"><use href="#minus"/></svg></td><th colspan="2">Scope</th></tr>
<tr><td></td><th>Scoping Method</th><td class="ro">Geometry Selection</td></tr>
<tr><td></td><th>Geometry</th><td class="ro">All Bodies</td></tr>
<tr class="grp"><td><svg class="i"><use href="#minus"/></svg></td><th colspan="2">Definition</th></tr>
<tr><td></td><th>Type</th><td>Total Deformation</td></tr>
<tr><td></td><th>By</th><td>Time</td></tr>
<tr><td></td><th><label><input type="checkbox">Display Time</label></th><td>Last</td></tr>
<tr><td></td><th>Calculate Time History</th><td>Yes</td></tr>
<tr><td></td><th>Identifier</th><td class="ro"></td></tr>
<tr><td></td><th>Suppressed</th><td>No</td></tr>
<tr class="grp"><td><svg class="i"><use href="#minus"/></svg></td><th colspan="2">Results</th></tr>
<tr><td></td><th><label><input type="checkbox">Minimum</label></th><td class="pk">0. mm</td></tr>
<tr><td></td><th><label><input type="checkbox">Maximum</label></th><td class="pk">9.8911 mm</td></tr>
<tr><td></td><th><label><input type="checkbox">Average</label></th><td class="ro">3.1241 mm</td></tr>
<tr><td></td><th></th><td class="pk"></td></tr>
</tbody>
</table>
<div class="sb top"><svg viewBox="0 0 10 10"><path d="M2 7l3-3 3 3"/></svg><i></i><svg viewBox="0 0 10 10"><path d="M2 4l3 3 3-3"/></svg></div>
</div>
</section>
</aside>

<div class="work">
<section class="view">
<svg class="scene" viewBox="276 142 1003 384" preserveAspectRatio="xMinYMin meet">
<g id="beams"></g>
<path d="M634 440h7" stroke="#000" fill="none"/><path d="M606 432h25l6 8-6 8h-25z" fill="#0000e0" stroke="#000060" stroke-width=".6"/><text x="608" y="444" fill="#fff">Min</text>
<path d="M1087.500 305.500h26l6 7-6 7h-26z" fill="#e80c14" stroke="#600" stroke-width="1"/><text x="1090" y="317" fill="#fff">Max</text>
<path d="M625.500 492.500h304v7h-304z" fill="#fff" stroke="#000"/><path d="M625 493h76v7h-76zM777 493h76v7h-76z"/><path d="M625 492.500h305" stroke="#555" stroke-width="1.500"/>
<text x="615" y="490">0.00</text><text x="764" y="490">25.00</text><text x="917" y="490">50.00 (mm)</text><text x="688" y="511">12.50</text><text x="841" y="511">37.50</text>
<path d="M1204.500 461v-38" stroke="#0b6a18" stroke-width="3"/><path d="M1199 426l5.500-13 5.500 13z" fill="#109a20"/>
<path d="M1205 461l32-11" stroke="#b01010" stroke-width="3"/><path d="M1244 447l-11-1 3 9z" fill="#c01010"/><circle cx="1239.500" cy="440" r="5.500" fill="#28c0b0"/><circle cx="1238" cy="438.500" r="2" fill="#90f0e4"/>
<path d="M1205 461l26 13" stroke="#0a0a80" stroke-width="3"/><path d="M1239 479l-8-9-4 9z" fill="#1010b0"/>
<text x="1204" y="405" fill="#38b038">Y</text><text x="1251" y="444" fill="#e02030">X</text><text x="1244" y="482" fill="#2020c0">Z</text>
</svg>
<div class="info"><b>A: Static Structural</b><span>Total Deformation</span><span>Type: Total Deformation</span><span>Unit: mm</span><span>Time: 1</span><span>12/14/2018 10:16 AM</span></div>
<div class="legend"><div class="sw"><i class="c1"></i><i class="c2"></i><i class="c3"></i><i class="c4"></i><i class="c5"></i><i class="c6"></i><i class="c7"></i><i class="c8"></i><i class="c9"></i></div>
<div class="lv"><b>9.8911 Max</b><span>8.7921</span><span>7.6931</span><span>6.5941</span><span>5.4951</span><span>4.396</span><span>3.297</span><span>2.198</span><span>1.099</span><b>0 Min</b></div></div>
</section>
<div class="vtabs"><svg class="sl"><path d="M1 0l6 14" /></svg><button class="b">Geometry</button><svg class="sl"><path d="M1 14L8 0" /></svg><button>Print Preview</button><svg class="sl"><path d="M1 0l7 14M2 14L8 0" /></svg><button>Report Preview</button><svg class="sl"><path d="M1 14L8 0" /></svg><span></span></div>

<div class="lower">
<section class="graph">
<h2 class="cap">Graph<svg class="i"><use href="#pushpin"/></svg></h2>
<div class="gbody">
<div class="gtools"><i class="grip"></i><span>Animation</span><button aria-label="Previous"><svg class="i"><use href="#prev"/></svg></button><button aria-label="Play"><svg class="i"><use href="#play"/></svg></button><button class="on" aria-label="Stop"><svg class="i"><use href="#stop"/></svg></button><button aria-label="Next"><svg class="i"><use href="#next"/></svg></button><i class="sep"></i><button class="on" aria-label="Distributed"><svg class="i"><use href="#fr1"/></svg></button><button aria-label="Result sets"><svg class="i"><use href="#fr2"/></svg></button><i class="sep"></i><label class="combo"><select aria-label="Frames"><option>20 Frames</option></select></label><span></span><label class="combo"><select aria-label="Duration"><option>2 Sec (Auto)</option></select></label><i class="sep"></i><button aria-label="Export"><svg class="i"><use href="#save"/></svg></button><i class="sep"></i><button aria-label="Zoom"><svg class="i"><use href="#magr"/></svg></button><button aria-label="Contours"><svg class="i"><use href="#bars"/></svg></button><i class="sep"></i><button aria-label="Cycle wave"><svg class="i"><use href="#cyc"/></svg></button><span class="dim">3 Cycles</span></div>
<div class="gplot"><div class="track"></div><div class="step">1</div></div>
</div>
<div class="gtabs"><button class="ga">Graphics Annotations</button><svg class="gs"><path d="M3 0l9 14.500q1 1 2 1H20"/></svg><button class="gb b">Graph</button></div>
</section>
<section class="tab">
<h2 class="cap">Tabular Data<svg class="i"><use href="#pushpin"/></svg></h2>
<div class="tbody">
<table class="data">
<thead><tr><th></th><th>Time [s]</th><th><label class="mn"><input type="checkbox" checked>Minimum [mm]</label></th><th><label class="mx"><input type="checkbox" checked>Maximum [mm]</label></th><th><label class="av"><input type="checkbox" checked>Average [mm]</label></th></tr></thead>
<tbody>
<tr><th>1</th><td>0.1</td><td>0.</td><td>0.98931</td><td>0.31251</td></tr>
<tr><th>2</th><td>0.2</td><td>0.</td><td>1.9787</td><td>0.62502</td></tr>
<tr><th>3</th><td>0.35</td><td>0.</td><td>3.4629</td><td>1.0938</td></tr>
<tr><th>4</th><td>0.575</td><td>0.</td><td>5.6894</td><td>1.797</td></tr>
<tr><th>5</th><td>0.9125</td><td>0.</td><td>9.0288</td><td>2.8515</td></tr>
<tr><th>6</th><td>1.</td><td>0.</td><td>9.8911</td><td>3.1241</td></tr>
</tbody></table></div>
</section>
</div>
</div>
</main>

<footer class="status"><span></span><span></span><span><svg class="i"><use href="#msg"/></svg>No Messages</span><span>No Selection</span><span class="units"><em>Metric (mm, kg, N, s, mV, mA)</em><em>Degrees</em><em>rad/s</em><em>Celsius</em></span><svg class="i"><path d="M13 2L2 13M13 6l-7 7M13 10l-3 3" stroke="#999"/></svg></footer>

<div class="task">
<button class="start" aria-label="Start"><svg class="m"><use href="#winlogo"/></svg></button>
<label class="search"><svg class="m" viewBox="0 0 16 16"><circle cx="8" cy="8" r="6.500" fill="none" stroke="#111" stroke-width="2"/></svg><input type="text" placeholder="Type here to search" aria-label="Search"><svg class="m"><use href="#mic"/></svg></label>
<div class="apps"><button aria-label="Edge"><svg><use href="#ie"/></svg></button><button class="run" aria-label="Explorer"><svg><use href="#expr"/></svg></button><button aria-label="Store"><svg><use href="#store"/></svg></button><button class="run" aria-label="Chrome"><svg><use href="#chrome"/></svg></button><button aria-label="Mail"><svg><use href="#mail"/></svg></button><button class="run" aria-label="Workbench"><svg><use href="#ans"/></svg></button><button class="run cur" aria-label="Mechanical"><svg><use href="#mech"/></svg></button><button class="run" aria-label="Camtasia"><svg><use href="#cam"/></svg></button><button class="run" aria-label="Recorder"><svg><use href="#cam2"/></svg></button></div>
<div class="tray"><span>Programs</span><sup>»</sup><svg class="m"><use href="#people"/></svg><svg class="m"><use href="#up"/></svg><svg class="m"><use href="#bat"/></svg><svg class="m"><use href="#wifi"/></svg><time>10:16 AM<br>12/14/2018</time><span class="badge"><svg><use href="#note"/></svg><b>2</b></span></div>
</div>
<script src="beams.js"></script>
</body>
</html>
```
FILE: beams.js
```js
// Three plates, each a 20 x 3 grid of elements drawn in isometric view and
// coloured by deformation band.
const NS = "http://www.w3.org/2000/svg";
const BANDS = {
  blue: ["#0000a6", "#0000a8"],
  sky: ["#0b88b6", "#0c84ae"],
  cyan: ["#10cab6", "#12c2b0"],
  sea: ["#12cc80", "#12c67a"],
  green: ["#08d400", "#0cce04"],
  lime: ["#86c80a", "#82c20c"],
  yellow: ["#cfd00a", "#c6c80e"],
  orange: ["#c8900e", "#c08a12"],
  red: ["#c20006", "#b80006"]
};
const LONG = [["blue", 0.348], ["sky", 0.517], ["cyan", 0.667], ["sea", 0.805], ["green", 0.95], ["lime", 1]];
const SHORT = [["blue", 0.172], ["sky", 0.302], ["cyan", 0.4], ["sea", 0.5], ["green", 0.6], ["lime", 0.7], ["yellow", 0.8], ["orange", 0.9], ["red", 1]];
const PLATES = [
  { left: [448.5, 312.5], near: [512.5, 345], run: [462, -151.5], arch: 2, bands: LONG },
  { left: [543.5, 362.5], near: [607, 396], run: [462, -152], arch: 2, bands: LONG },
  { left: [639, 412], near: [702.5, 446], run: [461, -138], arch: 1, bands: SHORT }
];
const DEPTH = 27.500;
const NX = 20;
const NY = 3;
const host = document.getElementById("beams");

function add(tag, attrs) {
  const el = document.createElementNS(NS, tag);
  for (const k in attrs) el.setAttribute(k, attrs[k]);
  host.appendChild(el);
}
const str = p => p[0].toFixed(1) + "," + p[1].toFixed(1);

PLATES.forEach(b => {
  const at = (t, s, d) => [
    b.left[0] + (b.near[0] - b.left[0]) * s + b.run[0] * t,
    b.left[1] + (b.near[1] - b.left[1]) * s + b.run[1] * t - b.arch * 4 * t * (1 - t) + d
  ];
  const line = (t0, t1, s, d) => {
    const out = [];
    for (let i = 0; i <= NX; i++) out.push(at(t0 + (t1 - t0) * i / NX, s, d));
    return out;
  };
  const poly = (pts, fill) => add("polygon", { points: pts.map(str).join(" "), fill });
  const wire = pts => add("polyline", { points: pts.map(str).join(" "), class: "edge" });

  poly([at(0, 0, 0), at(0, 1, 0), at(0, 1, DEPTH), at(0, 0, DEPTH)], "#000058");
  let t0 = 0;
  b.bands.forEach(([name, t1]) => {
    poly(line(t0, t1, 0, 0).concat(line(t1, t0, 1, 0)), BANDS[name][0]);
    poly(line(t0, t1, 1, 0).concat(line(t1, t0, 1, DEPTH)), BANDS[name][1]);
    t0 = t1;
  });
  for (let j = 0; j <= NY; j++) {
    wire(line(0, 1, j / NY, 0));
    wire([at(0, j / NY, 0), at(0, j / NY, DEPTH)]);
  }
  wire(line(0, 1, 1, DEPTH));
  wire([at(0, 0, DEPTH), at(0, 1, DEPTH)]);
  for (let i = 0; i <= NX; i++) {
    wire([at(i / NX, 0, 0), at(i / NX, 1, 0)]);
    wire([at(i / NX, 1, 0), at(i / NX, 1, DEPTH)]);
  }
});
```
FILE: styles.css
```css
* { box-sizing: border-box; }
body { margin: 0; height: 100vh; display: flex; flex-direction: column; background: #f0f0f0; color: #111; font: 10px/14px "Open Sans", "Noto Sans", sans-serif; overflow: hidden; }
button, select, input { font: inherit; color: inherit; border: 0; background: none; padding: 0; margin: 0; }
h1, h2, ul { margin: 0; padding: 0; font-weight: 400; font-size: 10px; }
button { white-space: nowrap; }
.b { font-weight: 700; }
.defs { display: none; }
.i { width: 14px; height: 14px; flex: none; }
.m { width: 16px; height: 16px; flex: none; }

.title { flex: none; height: 20px; background: #fff; display: flex; align-items: center; gap: 3px; padding-left: 1px; }
.wctl { margin-left: auto; display: flex; }
.wctl button { width: 39px; height: 20px; display: grid; place-items: center; }

.bar { flex: none; height: 20px; display: grid; align-items: center; border-bottom: 1px solid #a0a0a0; white-space: nowrap; }
.bar button, .gtools button, .otools button { display: flex; align-items: center; height: 19px; }
.bar > span, .bar > label { overflow: visible; }
button:disabled, .dim { color: #a0a0a0; }
.dd::after, .combo::after { content: ""; flex: none; border: 3px solid transparent; border-top: 4px solid #111; border-bottom: 0; margin-left: auto; }
.bar .dd { padding-right: 5px; }
.on { background: #fafafa; border: 1px solid #999; border-right-color: #e4e4e4; border-bottom-color: #e4e4e4; padding-left: 2px; }
.bar .on { margin-right: 4px; }
.bar2 .on, .bar6 .on { margin-right: 1px; }
.grip { width: 2px; height: 15px; margin-left: 2px; border-right: 1px solid #999; }
.dbl { width: 5px; height: 20px; border-left: 1px solid #999; }
.sep { width: 1px; height: 15px; margin-left: 3px; background: #a8a8a8; }
.combo { display: flex; align-items: center; height: 15px; background: #fff; padding: 0 4px 0 3px; }
.combo select { appearance: none; flex: 1; min-width: 0; outline: 0; opacity: 1; height: 15px; }
.combo.off { background: none; color: #8a8a8a; }
.off::after { border-top-color: #999; }

.bar1 { grid-template-columns: 12px 24px 25px 30px 32px 32px 30px 12px 22px 23px 20px 10px 61px 93px 75px 23px 23px 22px 23px 30px 73px 22px 1fr; }
.bar2 { grid-template-columns: 10px 22px 22px 26px 28px 22px 23px 22px 23px 23px 22px 23px 6px 29px 7px 22px 22px 23px 23px 7px 23px 23px 22px 22px 23px 23px 22px 23px 21px 8px 28px 1fr; }
.bar3 { grid-template-columns: 11px 86px 88px 125px 69px 9px 77px 22px 63px 74px 10px 22px 23px 22px 23px 20px 8px 30px 1fr 12px 52px 70px 69px 95px 70px; }
.bar4 { grid-template-columns: 11px 76px 1fr; }
.bar5 { grid-template-columns: 11px 22px 49px 83px 118px 122px 13px 93px 30px 30px 30px 30px 30px 21px 21px 66px 1fr; }
.bar6 { height: 22px; border-bottom: 2px solid #777; grid-template-columns: 8px 35px 117px 31px 29px 30px 23px 21px 8px 23px 21px 8px 51px 8px 44px 100px; }
.bar3 .combo, .bar5 .combo, .bar6 .combo { margin-right: 4px; }
input[type="range"] { appearance: none; width: 112px; height: 12px; background: linear-gradient(#999, #999) 0 3px / 100% 1px no-repeat; }
input[type="range"]::-webkit-slider-thumb { appearance: none; width: 3px; height: 12px; border: 1px solid #999; background: #f0f0f0; }

main { flex: 1; min-height: 0; display: grid; grid-template-columns: 271px 1fr; gap: 4px; }
aside { display: flex; flex-direction: column; gap: 4px; min-height: 0; background: #fff; border-right: 1px solid #ddd; }
.cap { flex: none; height: 18px; display: flex; align-items: center; justify-content: space-between; padding: 0 0 0 3px; background: linear-gradient(90deg, #bccbdc, #d3e1ef); border-bottom: 1px solid #999; }
.act { color: #fff; background: linear-gradient(90deg, #94aecc, #b6cee8); }
.outline { flex: none; display: flex; flex-direction: column; height: 288px; }
.filter, .otools { height: 19px; display: grid; align-items: center; background: #f0f0f0; border-bottom: 1px solid #ddd; }
.filter { grid-template-columns: 9px 30px 83px 125px 1fr; }
.filter .combo { margin-right: 3px; }
.filter input { background: #fff; height: 15px; width: 100%; margin-left: 4px; }
.otools { height: 21px; grid-template-columns: 11px 20px 20px 20px 20px 21px 1fr; }
.scrollrow { flex: 1; min-height: 0; display: flex; background: #fff; overflow: hidden; border-left: 1px solid #aaa; }
.tree { flex: 1; min-width: 0; display: flex; flex-direction: column; list-style: none; padding: 0 0 4px 29px; font: 9px/13px "DejaVu Sans Condensed", "Open Sans", sans-serif; }
.tree li { flex: 1; min-height: 0; display: flex; align-items: center; white-space: nowrap; }
.tree .b { font-size: 9px; }
.tree span { padding: 0 1px; margin-left: 2px; }
.g { position: relative; flex: none; width: 22px; height: 100%; }
.v::before { content: ""; position: absolute; left: 5px; top: 0; bottom: 0; border-left: 1px dotted #888; }
.l::before { content: ""; position: absolute; left: 5px; top: 0; height: 50%; border-left: 1px dotted #888; }
.h::after { content: ""; position: absolute; left: 5px; top: 50%; width: 12px; border-top: 1px dotted #888; }
.g button { position: absolute; left: -2px; top: 0; z-index: 1; height: 14px; }
.st { width: 9px; height: 14px; flex: none; margin-left: -6px; }
.tree .i { width: 14px; height: 13px; margin-left: -1px; }
.tree .g button .i { width: 14px; height: 14px; margin: 0; display: block; }
.sel { position: relative; background: #0f78d4; color: #fff; outline: 1px dotted #d08030; outline-offset: -1px; }
.hand { position: absolute; left: 42px; top: 3px; width: 12px; height: 16px; z-index: 2; }
.sb { flex: none; width: 15px; background: #f0f0f0; display: flex; flex-direction: column; align-items: center; }
.sb svg { width: 12px; height: 14px; flex: none; }
.sb path { fill: none; stroke: #444; stroke-width: 1.500; }
.sb i { width: 12px; background: #cdcdcd; }
.low i { flex: 3; margin-top: 53px; }
.top i { height: 112px; margin-bottom: auto; }

.details { flex: 1; min-height: 0; display: flex; flex-direction: column; margin-bottom: 4px; }
.props { flex: 1; align-self: flex-start; border-collapse: collapse; table-layout: fixed; width: 100%; font-size: 9px; }
.props td, .props th { height: 15px; padding: 0 0 0 3px; text-align: left; font-weight: 400; border: 1px solid #b4b4b4; white-space: nowrap; overflow: hidden; line-height: 13px; }
.props tr > :first-child { padding: 0; border-color: transparent #b4b4b4 transparent transparent; }
.k0 { width: 12px; }
.k1 { width: 100px; }
.props .grp th { font-weight: 700; }
.props .i { display: block; width: 13px; height: 13px; margin-left: -1px; }
.props label { display: flex; align-items: center; gap: 3px; }
.props input { appearance: none; width: 10px; height: 10px; border: 1px solid #aaa; background: #fff; }
.props .ro { background: #e9e8e5; }
.props .pk { background: #f794b0; }

.work { display: flex; flex-direction: column; min-width: 0; min-height: 0; }
.view { position: relative; flex: 1; min-height: 0; background: #fff; border-left: 1px solid #777; overflow: hidden; padding: 13px 0 0 14px; }
.scene { position: absolute; left: 0; top: 0; width: 100%; height: 100%; }
.scene text { font-size: 10px; }
.edge { fill: none; stroke: #000; stroke-width: 0.8; }
.info { position: relative; display: flex; flex-direction: column; line-height: 13px; padding-bottom: 13px; }
.info > * { line-height: 13px; height: 13px; }
.info b { height: 14px; line-height: 14px; }
.legend { position: relative; display: flex; gap: 8px; }
.sw { width: 14px; margin-top: 6px; height: 136px; border: 1px solid #000; display: flex; flex-direction: column; gap: 1px; background: #222; }
.sw i { flex: 1; }
.c1 { background: #e80000; } .c2 { background: #ffb000; } .c3 { background: #ffff00; } .c4 { background: #b0f800; } .c5 { background: #00f800; } .c6 { background: #1ce8a8; } .c7 { background: #18f8f8; } .c8 { background: #18b0f0; } .c9 { background: #0000f4; }
.lv { display: flex; flex-direction: column; line-height: 15px; }
.lv > * { height: 15px; }

.vtabs { flex: none; height: 15px; display: flex; align-items: center; border: 1px solid #222; border-width: 1px 1px 1px 0; margin-bottom: 4px; background: #fff; }
.vtabs span { flex: 1; align-self: stretch; background: #f0f0f0; }
.vtabs button { line-height: 13px; }
.sl { width: 9px; height: 14px; flex: none; }
.sl path, .gs path { fill: none; stroke: #222; }
.lower { flex: none; height: 122px; padding-bottom: 3px; display: grid; grid-template-columns: 587fr 411fr; gap: 6px; margin: 0 1px 0 0; }
.lower section { display: flex; flex-direction: column; min-width: 0; min-height: 0; }
.gbody { flex: 1; background: #fff; border-left: 1px solid #777; }
.gtools { display: grid; align-items: center; height: 21px; background: #f0f0f0; grid-template-columns: 7px 53px 20px 18px 23px 19px 5px 23px 20px 5px 117px 3px 115px 8px 24px 5px 20px 22px 11px 22px 1fr; white-space: nowrap; }
.gtools .on { height: 19px; margin-right: 2px; }
.gtools .sep { margin-left: 0; }
.gtools .combo { padding-left: 7px; }
.gplot { padding: 16px 16px 0 70px; }
.track { height: 4px; border: 1px solid #222; background: #fff; }
.step { height: 13px; margin-top: 22px; border: 1px solid #aaa; background: #f0f0f0; text-align: center; line-height: 11px; }
.gtabs { flex: none; height: 17px; display: flex; }
.gtabs button { height: 16px; line-height: 14px; }
.ga { background: #fff; border-bottom: 1px solid #aaa; padding-left: 19px; clip-path: polygon(4px 0, 100% 0, 100% 100%, 16px 100%); }
.gs { width: 20px; height: 16px; margin-left: -8px; margin-right: -12px; flex: none; }
.gs path { stroke: #999; }
.gb { background: #fff; border: 1px solid #999; border-width: 0 1px 1px 0; border-radius: 0 0 3px 0; padding: 0 4px 0 7px; clip-path: polygon(0 0, 100% 0, 100% 100%, 6px 100%); }
.tbody { flex: 1; background: #9d9d9d; border-left: 1px solid #777; }
.data { border-collapse: collapse; table-layout: fixed; width: 333px; height: 99px; background: #ebe9e6; font-size: 9px; line-height: 12px; }
.data th, .data td { padding: 0 0 0 2px; text-align: left; font-weight: 400; border: 1px solid #bcbab8; white-space: nowrap; }
.data thead th { background: #f4f4f4; border-color: #888; }
.data tbody th { border-color: #888; background: #f0f0f0; }
.data th:nth-child(1) { width: 12px; } .data th:nth-child(2) { width: 43px; } .data th:nth-child(3), .data th:nth-child(4) { width: 96px; } .data th:nth-child(5) { width: 86px; }
.data label { display: flex; align-items: center; gap: 4px; font-size: 10px; }
.data input { appearance: none; width: 11px; height: 11px; background: #fff; border: 1px solid #777; border-right-color: #eee; border-bottom-color: #eee; flex: none; }
.data input:checked::after { content: ""; display: block; width: 3px; height: 6px; margin: 0 0 0 3px; border: solid #111; border-width: 0 2px 2px 0; rotate: 40deg; }
.mn { color: #b01838; } .mx { color: #38a838; } .av { color: #2818a8; }

.status { flex: none; height: 19px; display: grid; grid-template-columns: 344px 163px 138px 304px 1fr 22px; gap: 3px; border-top: 1px solid #fff; align-items: end; padding-bottom: 1px; }
.status > span { height: 17px; border: 1px solid #aaa; border-width: 1px 1px 0 1px; display: flex; align-items: center; white-space: nowrap; padding-left: 1px; gap: 3px; }
.status > span:first-child { border-left: 0; }
.status > .units { gap: 11px; }
.units em { font-style: normal; }

.task { flex: none; height: 33px; background: #040a14; color: #fff; display: flex; font-size: 11px; }
.start { width: 40px; display: grid; place-items: center; }
.search { width: 286px; background: #f2f2f2; color: #222; display: flex; align-items: center; padding: 0 9px; gap: 8px; }
.search input { flex: 1; outline: 0; min-width: 0; }
.search input::placeholder { color: #222; opacity: 1; }
.apps { display: flex; padding-left: 17px; }
.apps button { width: 41px; height: 33px; display: grid; place-items: center; border-bottom: 2px solid transparent; }
.apps svg { width: 20px; height: 20px; }
.apps .run { background: linear-gradient(#7cc4ee, #7cc4ee) 50% 100% / 34px 2px no-repeat; background-origin: border-box; }
.apps .cur { background: linear-gradient(#7cc4ee, #7cc4ee) 50% 100% / 100% 2px no-repeat border-box, #383c44; }
.tray { margin-left: auto; display: flex; align-items: center; padding-right: 14px; }
.tray span { font-size: 10px; }
.tray sup { margin: -14px 16px 0 7px; font-size: 12px; }
.tray .m { margin-right: 14px; }
.tray .m + .m { margin-right: 5px; }
.tray .m:nth-of-type(3) { margin-right: 24px; }
time { font-size: 10px; line-height: 15px; text-align: center; margin: 0 10px 0 0; }
.badge { position: relative; width: 20px; height: 20px; }
.badge svg { width: 20px; height: 20px; }
.badge b { position: absolute; left: 11px; top: 7px; font: 9px/14px "Open Sans", sans-serif; }
```
